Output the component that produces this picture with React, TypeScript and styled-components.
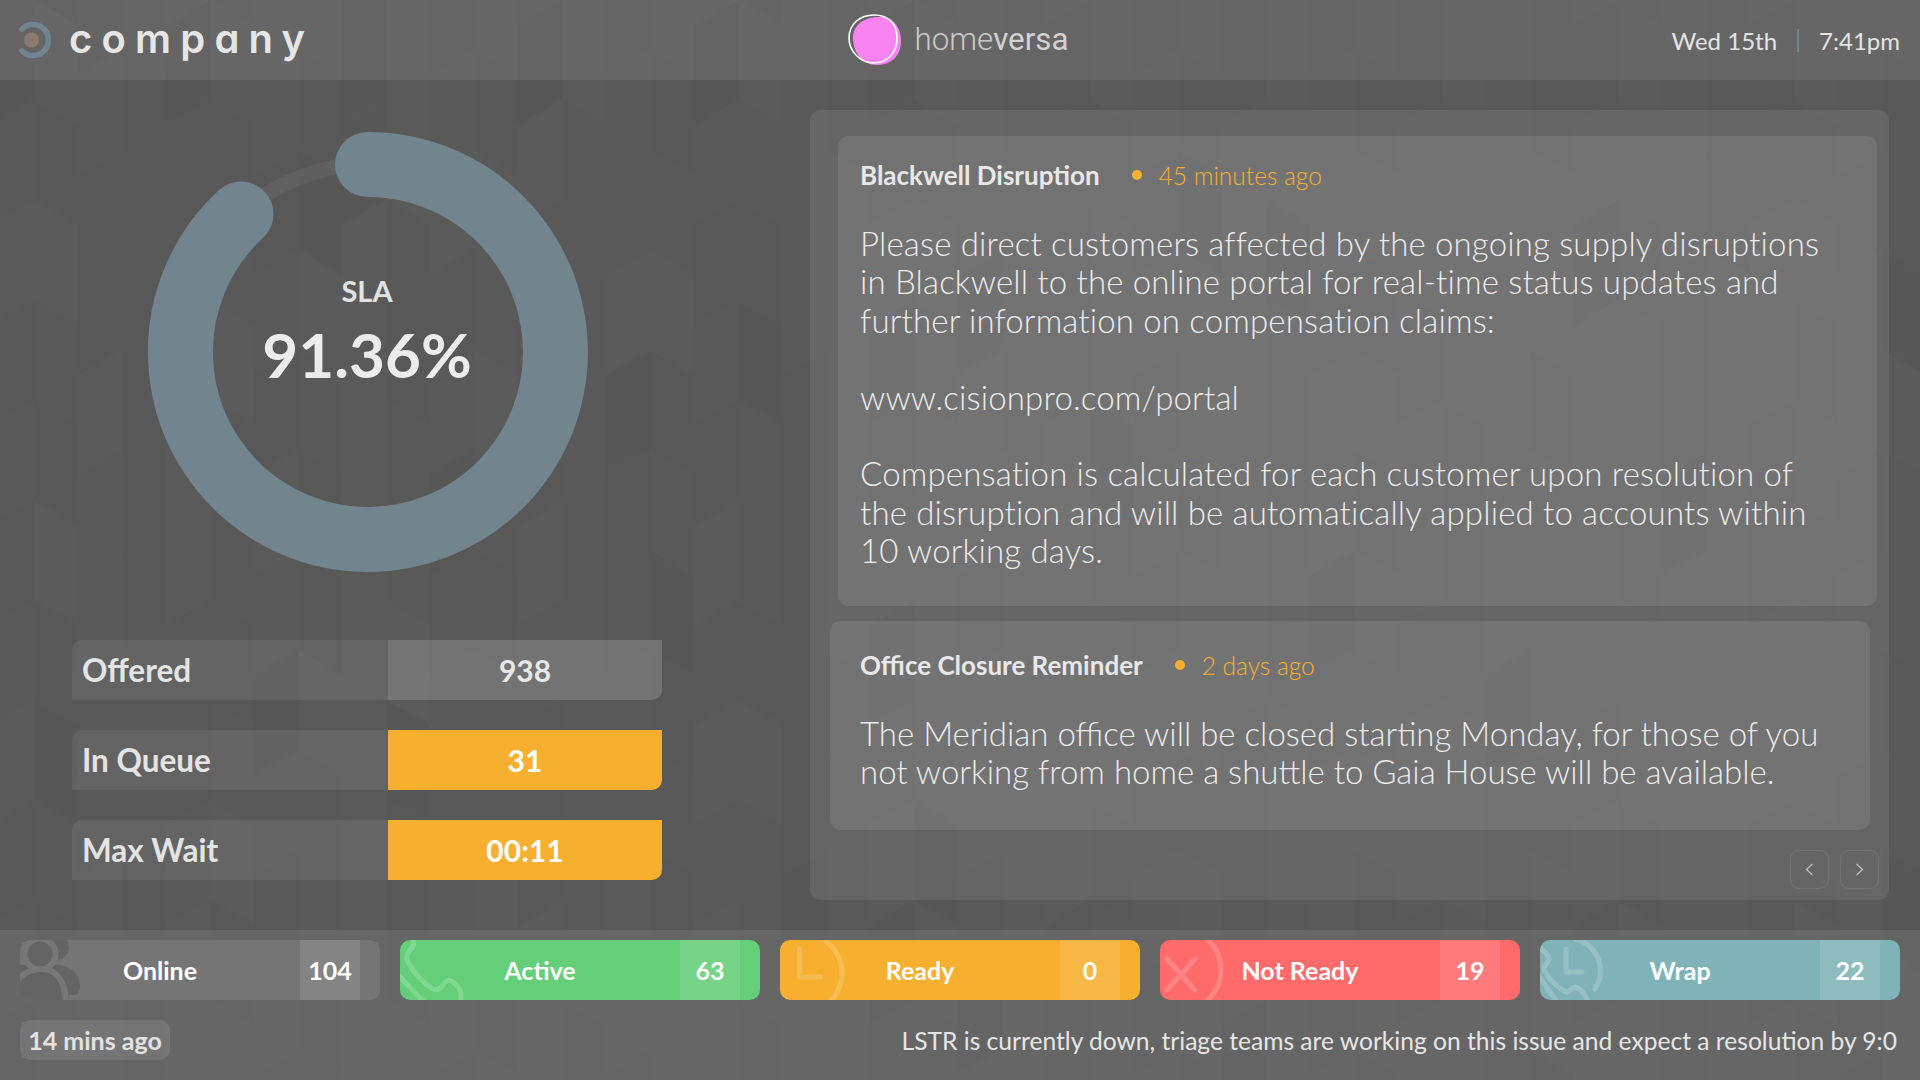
import React, { useMemo } from "react";
import styled, { createGlobalStyle } from "styled-components";

const Global = createGlobalStyle`
  html, body { margin: 0; padding: 0; background: #595959; }
  * { box-sizing: border-box; }
  body { font-family: "Lato", "Open Sans", sans-serif; color: #e6e6e6; }
`;

const AMBER = "#f6af2e";

const Screen = styled.div`
  position: relative;
  width: 1920px;
  height: 1080px;
  overflow: hidden;
  background: #595959;
  display: flex;
  flex-direction: column;
`;
const Backdrop = styled.svg`
  position: absolute;
  inset: 0;
`;
const Header = styled.header`
  position: relative;
  height: 80px;
  flex: none;
  display: grid;
  grid-template-columns: 1fr auto 1fr;
  align-items: center;
  padding: 0 20px 0 17px;
  background: rgba(255, 255, 255, 0.078);
`;
const Brand = styled.div`
  display: flex;
  align-items: center;
  gap: 18px;
`;
const BrandName = styled.span`
  font-family: "Inter", sans-serif;
  font-feature-settings: "cv11" 1;
  font-size: 40px;
  font-weight: 600;
  letter-spacing: 9.2px;
  line-height: 1;
  color: #e6e6e6;
  margin-top: -3px;
`;
const Partner = styled.div`
  display: flex;
  align-items: center;
  gap: 12px;
`;
const PartnerName = styled.span`
  font-family: "Roboto", sans-serif;
  font-size: 31.3px;
  font-weight: 300;
  color: #c9c9c9;
  line-height: 1;
  b { font-weight: 400; color: #d2d2d2; }
`;
const Clock = styled.div`
  justify-self: end;
  display: flex;
  align-items: center;
  gap: 20px;
  font-size: 24px;
  font-weight: 400;
  color: #e4e4e4;
`;
const ClockBar = styled.i`
  width: 2px;
  height: 23px;
  background: #6f8490;
`;

const Main = styled.main`
  position: relative;
  flex: 1;
  min-height: 0;
  display: grid;
  grid-template-columns: 734px 1fr;
`;
const LeftColumn = styled.section`
  display: flex;
  flex-direction: column;
  align-items: center;
  padding-top: 52px;
`;
const Gauge = styled.div`
  position: relative;
  width: 441px;
  height: 440px;
`;
const GaugeText = styled.div`
  position: absolute;
  inset: 0;
  display: flex;
  flex-direction: column;
  align-items: center;
  padding-top: 139px;
`;
const GaugeLabel = styled.div`
  font-size: 29px;
  font-weight: 700;
  line-height: 40px;
  color: #e2e2e2;
`;
const GaugeValue = styled.div`
  font-size: 62px;
  font-weight: 700;
  line-height: 76px;
  margin-top: 5px;
  color: #ececec;
`;
const Stats = styled.div`
  width: 590px;
  margin-top: 68px;
  display: flex;
  flex-direction: column;
  gap: 30px;
`;
const Stat = styled.div`
  height: 60px;
  display: grid;
  grid-template-columns: 316px 1fr;
  border-radius: 10px 0 10px 0;
  overflow: hidden;
  font-weight: 700;
`;
const StatLabel = styled.div`
  display: flex;
  align-items: center;
  padding-left: 10px;
  font-size: 31.5px;
  background: rgba(255, 255, 255, 0.065);
  color: #e4e4e4;
`;
const StatValue = styled.div<{ $warn?: boolean }>`
  display: flex;
  align-items: center;
  justify-content: center;
  font-size: 30px;
  background: ${(p) => (p.$warn ? AMBER : "rgba(255,255,255,0.16)")};
  color: ${(p) => (p.$warn ? "#fff" : "#e8e8e8")};
`;

const Panel = styled.section`
  margin: 30px 31px 30px 76px;
  padding-top: 26px;
  border-radius: 10px;
  background: rgba(255, 255, 255, 0.078);
  display: flex;
  flex-direction: column;
`;
const Card = styled.article<{ $left: number; $right: number; $top: number; $height: number; $gap: number }>`
  height: ${(p) => p.$height}px;
  margin: 0 ${(p) => p.$right}px 15px ${(p) => p.$left}px;
  padding: ${(p) => p.$top}px 20px 0 ${(p) => 50 - p.$left}px;
  border-radius: 10px;
  background: rgba(255, 255, 255, 0.085);
  & > p { margin-top: ${(p) => p.$gap}px; }
`;
const CardHead = styled.div`
  height: 30px;
  display: flex;
  align-items: center;
`;
const CardTitle = styled.span`
  font-size: 26px;
  font-weight: 700;
  color: #e8e8e8;
`;
const Dot = styled.i`
  width: 10px;
  height: 10px;
  border-radius: 50%;
  background: ${AMBER};
  margin: 0 17px 0 32px;
`;
const CardTime = styled.span`
  font-size: 24.5px;
  font-weight: 300;
  color: ${AMBER};
`;
const CardBody = styled.p<{ $track: number }>`
  margin: 0;
  font-size: 33px;
  line-height: 38.4px;
  letter-spacing: ${(p) => p.$track}px;
  font-weight: 300;
  color: #ececec;
  white-space: nowrap;
`;
const Nav = styled.div`
  display: flex;
  justify-content: flex-end;
  gap: 11px;
  margin: 5px 10px 0 0;
`;
const NavButton = styled.button`
  width: 39px;
  height: 39px;
  padding: 0;
  display: flex;
  align-items: center;
  justify-content: center;
  border: 1px solid rgba(255, 255, 255, 0.09);
  border-radius: 9px;
  background: transparent;
  color: #c4c4c4;
`;

const Footer = styled.footer`
  position: relative;
  height: 150px;
  flex: none;
  padding: 10px 20px 0;
  background: rgba(255, 255, 255, 0.078);
  display: flex;
  flex-direction: column;
  gap: 20px;
`;
const Pills = styled.div`
  display: grid;
  grid-template-columns: repeat(5, 360px);
  gap: 20px;
`;
const Pill = styled.div<{ $bg: string }>`
  position: relative;
  height: 60px;
  display: grid;
  grid-template-columns: 280px 60px;
  border-radius: 10px;
  overflow: hidden;
  background: ${(p) => p.$bg};
  color: #fff;
  font-size: 25px;
  font-weight: 700;
`;
const PillIcon = styled.svg`
  position: absolute;
  left: 0;
  top: 0;
`;
const PillLabel = styled.div`
  position: relative;
  display: flex;
  align-items: center;
  justify-content: center;
`;
const PillCount = styled.div`
  position: relative;
  display: flex;
  align-items: center;
  justify-content: center;
  background: rgba(255, 255, 255, 0.11);
`;
const Bottom = styled.div`
  display: flex;
  align-items: center;
  justify-content: space-between;
  height: 40px;
`;
const Stamp = styled.div`
  width: 150px;
  height: 40px;
  display: flex;
  align-items: center;
  justify-content: center;
  border-radius: 10px;
  background: rgba(255, 255, 255, 0.1);
  font-size: 25px;
  font-weight: 700;
  color: #e2e2e2;
`;
const Ticker = styled.div`
  margin-right: 3px;
  font-size: 24.6px;
  font-weight: 400;
  color: #e6e6e6;
  white-space: nowrap;
`;

function Pattern() {
  const cells = useMemo(() => {
    const out: { d: string; fill: string; o: number }[] = [];
    const w = 44;
    const slope = 25;
    const h = 100;
    for (let c = 0; c < 46; c++) {
      for (let r = -1; r < 13; r++) {
        const v = ((c * 73 + r * 137 + c * r * 19) % 97) / 97;
        const up = c % 2 === 0;
        const x = c * w - 10;
        const y = r * h + (c % 4 < 2 ? 0 : 50);
        const a = up ? y + slope : y;
        const b = up ? y : y + slope;
        out.push({
          d: `M${x} ${a}L${x + w} ${b}L${x + w} ${b + h}L${x} ${a + h}Z`,
          fill: v > 0.5 ? "#fff" : "#000",
          o: Math.abs(v - 0.5) * 0.022,
        });
      }
    }
    return out;
  }, []);
  return (
    <Backdrop width="1920" height="1080" viewBox="0 0 1920 1080" aria-hidden>
      {cells.map((s, i) => (
        <path key={i} d={s.d} fill={s.fill} fillOpacity={s.o} />
      ))}
    </Backdrop>
  );
}

const LogoMark = () => (
  <svg width="34" height="36" viewBox="0 0 34 36" fill="none">
    <path d="M5 7 A15.5 15.5 0 1 1 5 29" stroke="#6f8490" strokeWidth="5.5" strokeLinecap="round" />
    <circle cx="14.5" cy="18" r="7.5" fill="#8c7a70" />
  </svg>
);

const PartnerMark = () => (
  <svg width="54" height="52" viewBox="0 0 54 52" fill="none">
    <path d="M5 24 C5 10 17 3 32 3 C45 3 53 13 53 27 C53 41 44 51 29 51 C14 51 5 38 5 24Z" fill="#f683f0" />
    <path d="M1 24 C1 10 12 1 26 1 C40 1 49 9 49 24 C49 40 38 49 26 49 C13 49 1 38 1 24Z" stroke="#fff" strokeWidth="1.6" />
  </svg>
);

const Chevron = ({ dir }: { dir: "l" | "r" }) => (
  <svg width="9" height="13" viewBox="0 0 9 13" fill="none">
    <path d={dir === "l" ? "M7.5 1 L1.5 6.5 L7.5 12" : "M1.5 1 L7.5 6.5 L1.5 12"} stroke="currentColor" strokeWidth="1.2" />
  </svg>
);

const ico = { width: 80, height: 60, viewBox: "0 0 80 60", fill: "none" } as const;
const glyph = { stroke: "rgba(255,255,255,0.18)", strokeWidth: 5, strokeLinecap: "round", strokeLinejoin: "round" } as const;

const PeopleIcon = () => (
  <PillIcon {...ico}>
    <circle cx="36" cy="7" r="13" fill="#646464" />
    <path d="M26 25 C44 22 60 30 60 46 C60 52 58 55 54 55 L50 55 L49 60 H26Z" fill="#646464" />
    <path d="M0 25 H16 V38 H0Z" fill="#646464" />
    <circle cx="20" cy="14" r="15.5" fill="#646464" stroke="#777" strokeWidth="6" />
    <path d="M-4 64 V46 C-4 36 10 29 22 29 C38 29 46 44 46 64Z" fill="#646464" stroke="#777" strokeWidth="6" />
  </PillIcon>
);
const PhoneIcon = () => (
  <PillIcon {...ico}>
    <path d="M12 -2 C15 4 13 8 9 11 C6 15 6 18 8 22 C14 33 22 42 33 49 C38 51 41 48 43 45 C45 41 49 39 53 42 C58 46 61 50 61 54 V62" {...glyph} />
    <path d="M-2 35 L24 62" {...glyph} />
  </PillIcon>
);
const ReadyIcon = () => (
  <PillIcon {...ico}>
    <circle cx="22" cy="33" r="40" {...glyph} />
    <path d="M19.5 9 V37 H41" {...glyph} />
  </PillIcon>
);
const CrossIcon = () => (
  <PillIcon {...ico}>
    <circle cx="20" cy="30" r="41" {...glyph} />
    <path d="M7 19 L35 50 M35 19 L7 50" {...glyph} />
  </PillIcon>
);
const WrapIcon = () => (
  <PillIcon {...ico}>
    <path d="M36 -1 C56 4 68 28 55 49" {...glyph} />
    <path d="M26 9 V32 H42" {...glyph} />
    <path d="M-2 6 C4 11 10 16 9 20 C7 24 2 26 5 32 C10 40 18 48 26 52 C30 53 31 47 35 47 C40 48 45 54 48 62" {...glyph} />
    <path d="M-2 35 L17 62" {...glyph} />
  </PillIcon>
);

const STATUS = [
  { label: "Online", n: 104, bg: "#757575", Icon: PeopleIcon },
  { label: "Active", n: 63, bg: "#64cf78", Icon: PhoneIcon },
  { label: "Ready", n: 0, bg: AMBER, Icon: ReadyIcon },
  { label: "Not Ready", n: 19, bg: "#ff6b6b", Icon: CrossIcon },
  { label: "Wrap", n: 22, bg: "#80b3b7", Icon: WrapIcon },
];

export default function App() {
  return (
    <>
      <Global />
      <Screen>
        <Pattern />
        <Header>
          <Brand>
            <LogoMark />
            <BrandName>company</BrandName>
          </Brand>
          <Partner>
            <PartnerMark />
            <PartnerName>
              home<b>versa</b>
            </PartnerName>
          </Partner>
          <Clock>
            <span>Wed 15th</span>
            <ClockBar />
            <span>7:41pm</span>
          </Clock>
        </Header>
        <Main>
          <LeftColumn>
            <Gauge>
              <svg width="441" height="440" viewBox="0 0 441 440" fill="none">
                <circle cx="220.5" cy="220" r="187.5" stroke="rgba(255,255,255,0.05)" strokeWidth="15" />
                <path d="M220.5 32.5 A187.5 187.5 0 1 1 94 82" stroke="#72848d" strokeWidth="65" strokeLinecap="round" />
              </svg>
              <GaugeText>
                <GaugeLabel>SLA</GaugeLabel>
                <GaugeValue>91.36%</GaugeValue>
              </GaugeText>
            </Gauge>
            <Stats>
              <Stat>
                <StatLabel>Offered</StatLabel>
                <StatValue>938</StatValue>
              </Stat>
              <Stat>
                <StatLabel>In Queue</StatLabel>
                <StatValue $warn>31</StatValue>
              </Stat>
              <Stat>
                <StatLabel>Max Wait</StatLabel>
                <StatValue $warn>00:11</StatValue>
              </Stat>
            </Stats>
          </LeftColumn>
          <Panel>
            <Card $left={28} $right={12} $top={24} $height={470} $gap={34}>
              <CardHead>
                <CardTitle>Blackwell Disruption</CardTitle>
                <Dot />
                <CardTime>45 minutes ago</CardTime>
              </CardHead>
              <CardBody $track={0.16}>
                Please direct customers affected by the ongoing supply disruptions
                <br />
                in Blackwell to the online portal for real-time status updates and
                <br />
                further information on compensation claims:
                <br />
                <br />
                www.cisionpro.com/portal
                <br />
                <br />
                Compensation is calculated for each customer upon resolution of
                <br />
                the disruption and will be automatically applied to accounts within
                <br />
                10 working days.
              </CardBody>
            </Card>
            <Card $left={20} $right={19} $top={29} $height={209} $gap={34}>
              <CardHead>
                <CardTitle>Office Closure Reminder</CardTitle>
                <Dot />
                <CardTime>2 days ago</CardTime>
              </CardHead>
              <CardBody $track={0}>
                The Meridian office will be closed starting Monday, for those of you
                <br />
                not working from home a shuttle to Gaia House will be available.
              </CardBody>
            </Card>
            <Nav>
              <NavButton aria-label="Previous">
                <Chevron dir="l" />
              </NavButton>
              <NavButton aria-label="Next">
                <Chevron dir="r" />
              </NavButton>
            </Nav>
          </Panel>
        </Main>
        <Footer>
          <Pills>
            {STATUS.map(({ label, n, bg, Icon }) => (
              <Pill key={label} $bg={bg}>
                <Icon />
                <PillLabel>{label}</PillLabel>
                <PillCount>{n}</PillCount>
              </Pill>
            ))}
          </Pills>
          <Bottom>
            <Stamp>14 mins ago</Stamp>
            <Ticker>LSTR is currently down, triage teams are working on this issue and expect a resolution by 9:0</Ticker>
          </Bottom>
        </Footer>
      </Screen>
    </>
  );
}
